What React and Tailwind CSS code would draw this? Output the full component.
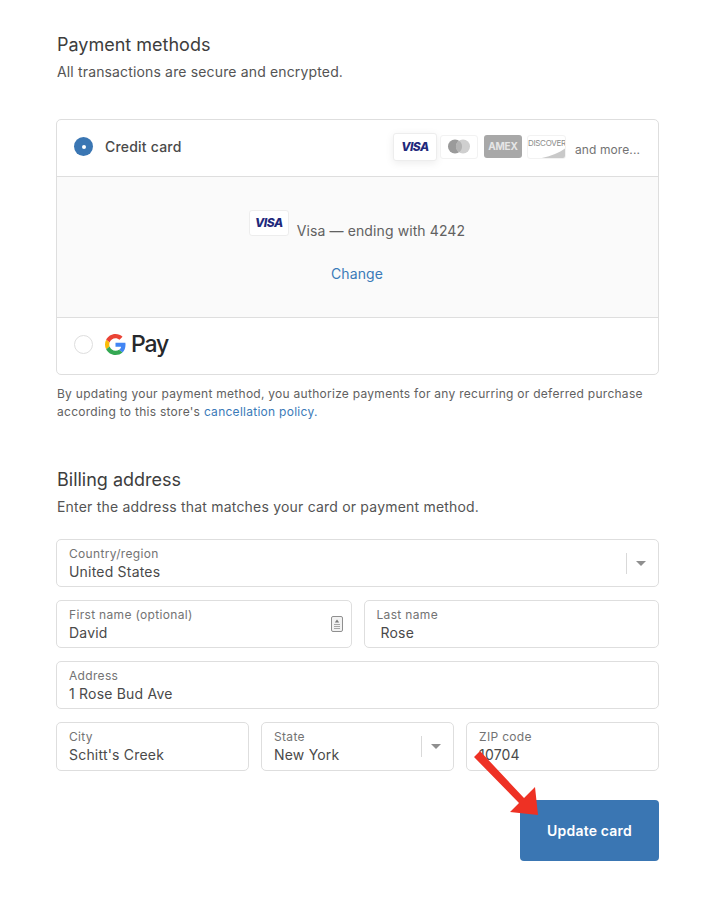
const font = { fontFamily: 'Inter, sans-serif' };

const CardChip = ({ className = '', children }) => (
  <div className={`flex items-center justify-center rounded-[3px] ${className}`}>{children}</div>
);

const VisaChip = ({ className = '' }) => (
  <CardChip className={`bg-white border border-[#ededed] ${className}`}>
    <span className="text-[12px] font-extrabold italic tracking-[-0.5px] text-[#1f2a7c]">VISA</span>
  </CardChip>
);

const Field = ({ label, value, className = '', valueClass = '', children }) => (
  <div className={`relative h-[48px] rounded-[5px] border border-[#dedede] bg-white pl-3 pt-[6px] ${className}`}>
    <div className="text-[12px] leading-[16px] tracking-[0.33px] text-[#737373]">{label}</div>
    <div className={`text-[14px] leading-[20px] tracking-[0.2px] text-[#4a4a4a] ${valueClass}`}>{value}</div>
    {children}
  </div>
);

const SelectCaret = () => (
  <div className="absolute right-0 top-[13px] flex h-[21px] items-center">
    <div className="h-[21px] w-px bg-[#d9d9d9]" />
    <svg width="10" height="5" viewBox="0 0 10 5" className="ml-[9px] mr-[12px]">
      <path d="M0 0h10L5 5z" fill="#8f8f8f" />
    </svg>
  </div>
);

export default function App() {
  return (
    <div style={font} className="relative h-[924px] w-[728px] bg-white pl-[56px] pr-[69px] pt-[34px]">
      <h2 className="ml-[1px] text-[18px] leading-[22px] text-[#3d3d3d]">Payment methods</h2>
      <p className="ml-[1px] mt-[6px] text-[14px] leading-[20px] tracking-[0.15px] text-[#545454]">All transactions are secure and encrypted.</p>

      <div className="mt-[37px] overflow-hidden rounded-[5px] border border-[#dedede]">
        <div className="flex h-[56px] items-center pb-[3px] pl-[17px] pr-[18px]">
          <div className="flex h-[19px] w-[19px] items-center justify-center rounded-full bg-[#3a76b3]">
            <div className="h-[4px] w-[4px] rounded-full bg-white" />
          </div>
          <span className="ml-[12px] text-[14px] font-medium tracking-[0.2px] text-[#4a4a4a]">Credit card</span>
          <div className="ml-auto flex items-center gap-[3px]">
            <VisaChip className="h-[28px] w-[44px] shadow-[0_2px_8px_rgba(0,0,0,0.08)]" />
            <CardChip className="h-[24px] w-[38px] border border-[#f2f2f2] bg-white">
              <svg width="24" height="15" viewBox="0 0 24 15">
                <circle cx="8" cy="7.5" r="7" fill="#9a9a9a" />
                <circle cx="16" cy="7.5" r="7" fill="#cfcfcf" />
                <path d="M12 1.7a7 7 0 0 1 0 11.6a7 7 0 0 1 0-11.6z" fill="#b3b3b3" />
              </svg>
            </CardChip>
            <CardChip className="ml-[3px] h-[23px] w-[38px] bg-[#a8a8a8]">
              <span className="text-[10px] font-bold tracking-[-0.2px] text-[#e6e6e6]">AMEX</span>
            </CardChip>
            <div className="relative ml-[2px] h-[24px] w-[39px] overflow-hidden rounded-[3px] border border-[#f2f2f2] bg-white">
              <span className="absolute left-[0px] top-[2px] text-[8px] leading-[10px] tracking-[-0.3px] text-[#8a8a8a]">DISCOVER</span>
              <svg width="39" height="24" viewBox="0 0 39 24" className="absolute left-0 top-0">
                <path d="M8 23C22 21 32 17 39 11v13H8z" fill="#c9c9c9" />
              </svg>
            </div>
            <span className="ml-[6px] mt-[6px] text-[12px] tracking-[0.1px] text-[#737373]">and more...</span>
          </div>
        </div>

        <div className="h-[142px] border-y border-[#dedede] bg-[#fafafa]">
          <div className="flex justify-center pt-[33px] pr-[1px]">
            <VisaChip className="h-[26px] w-[40px]" />
            <span className="ml-[8px] mt-[9px] text-[14px] leading-[24px] tracking-[0.1px] text-[#616161]">Visa — ending with 4242</span>
          </div>
          <div className="mt-[19px] pr-[1px] text-center text-[14px] leading-[24px] tracking-[0.1px] text-[#3a7ab8]">Change</div>
        </div>

        <div className="flex h-[56px] items-center pb-[4px] pl-[17px]">
          <div className="h-[19px] w-[19px] rounded-full border border-[#dedede] bg-white" />
          <svg width="21" height="21" viewBox="0 0 48 48" className="ml-[12px]">
            <path fill="#EA4335" d="M24 9.5c3.5 0 6.7 1.2 9.2 3.600l6.900-6.900C35.900 2.400 30.400 0 24 0 14.600 0 6.500 5.400 2.600 13.200l8 6.200C12.500 13.600 17.800 9.500 24 9.500z" />
            <path fill="#4285F4" d="M46.900 24.500c0-1.600-.1-3.100-.4-4.500H24v9h12.900c-.6 3-2.200 5.500-4.700 7.200l7.700 6c4.500-4.200 7-10.300 7-17.700z" />
            <path fill="#FBBC05" d="M10.500 28.600c-.5-1.400-.8-3-.8-4.600s.3-3.200.8-4.600l-8-6.200C.9 16.500 0 20.100 0 24s.9 7.500 2.600 10.800l7.900-6.200z" />
            <path fill="#34A853" d="M24 48c6.500 0 11.900-2.100 15.900-5.800l-7.700-6c-2.200 1.500-4.900 2.300-8.200 2.300-6.200 0-11.500-4.200-13.400-9.800l-8 6.200C6.500 42.600 14.600 48 24 48z" />
          </svg>
          <span className="ml-[5px] text-[23px] font-medium leading-[28px] tracking-[-1.2px] text-[#26282b]">Pay</span>
        </div>
      </div>

      <p className="ml-[1px] mt-[10px] text-[12px] leading-[18px] tracking-[0.27px] text-[#616161]">
        By updating your payment method, you authorize payments for any recurring or deferred purchase
        <br />
        according to this store's <span className="text-[#3a7ab8]">cancellation policy.</span>
      </p>

      <h2 className="ml-[1px] mt-[48px] text-[18px] leading-[22px] text-[#3d3d3d]">Billing address</h2>
      <p className="ml-[1px] mt-[6px] text-[14px] leading-[20px] tracking-[0.2px] text-[#545454]">Enter the address that matches your card or payment method.</p>

      <div className="mt-[22px] flex flex-col gap-[13px]">
        <Field label="Country/region" value="United States">
          <SelectCaret />
        </Field>
        <div className="flex gap-[12px]">
          <Field label="First name (optional)" value="David" className="flex-1">
            <svg width="12" height="16" viewBox="0 0 12 16" className="absolute right-[8px] top-[15px]">
              <rect x="0.5" y="0.5" width="11" height="15" rx="1.500" fill="#f2f2f2" stroke="#8f8f8f" />
              <path d="M6 3.500l2.200 3H3.800z" fill="#7a7a7a" />
              <path d="M3 8.500h6M3 10.500h6M3 12.500h6" stroke="#a6a6a6" />
            </svg>
          </Field>
          <Field label="Last name" value="Rose" className="flex-1" valueClass="pl-[4px]" />
        </div>
        <Field label="Address" value="1 Rose Bud Ave" />
        <div className="flex gap-[12px]">
          <Field label="City" value="Schitt's Creek" className="h-[49px] flex-1" />
          <Field label="State" value="New York" className="h-[49px] flex-1">
            <SelectCaret />
          </Field>
          <Field label="ZIP code" value="10704" className="h-[49px] flex-1" />
        </div>
      </div>

      <div className="mt-[29px] flex justify-end">
        <button className="h-[61px] w-[139px] rounded-[4px] bg-[#3a76b3] text-[14px] font-semibold tracking-[0.2px] text-white">Update card</button>
      </div>

      {/* red annotation arrow over the zip field and button */}
      <svg width="728" height="924" viewBox="0 0 728 924" className="pointer-events-none absolute left-0 top-0">
        <path d="M474 757L480 751L524 798L535 787L538 815L510 812L519 803Z" fill="#ee3124" />
      </svg>
    </div>
  );
}
